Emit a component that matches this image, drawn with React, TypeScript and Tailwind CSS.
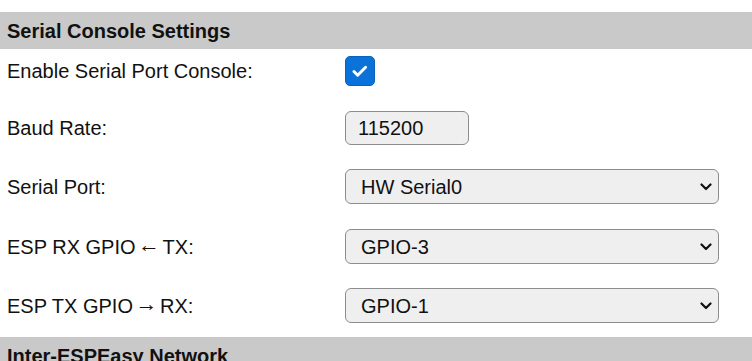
import React from 'react';

interface SelectRowProps {
  label: React.ReactNode;
  value: string;
  className?: string;
}

const Chevron: React.FC = () => (
  <svg
    className="pointer-events-none absolute right-[7px] top-1/2 -translate-y-1/2"
    width="12"
    height="8"
    viewBox="0 0 12 8"
  >
    <polyline points="1.5,1.5 6,6 10.5,1.5" fill="none" stroke="#111" strokeWidth="2.2" strokeLinecap="round" strokeLinejoin="round" />
  </svg>
);

// arrow glyph sits a bit larger/higher than the label text
const Arrow: React.FC<{ char: string }> = ({ char }) => (
  <span className="inline-block text-[22px] leading-none mx-[2.5px] -translate-y-[2px]">{char}</span>
);

const SectionHeader: React.FC<{ title: string; className?: string }> = ({ title, className = '' }) => (
  <div className={`h-[37px] flex items-center pl-[7px] bg-[#c9c9c9] font-bold text-[#111] ${className}`}>
    {title}
  </div>
);

const SelectRow: React.FC<SelectRowProps> = ({ label, value, className = '' }) => (
  <div className={`flex items-center h-[35px] ${className}`}>
    <div className="w-[345px] shrink-0 pl-[7px]">{label}</div>
    <div className="relative w-[374px] h-[35px]">
      <select
        defaultValue={value}
        className="appearance-none w-full h-full rounded-[6px] border border-[#8d8d8d] bg-[#efefef] pl-[15px] text-[20px] text-[#111] outline-none"
      >
        <option value={value}>{value}</option>
      </select>
      <Chevron />
    </div>
  </div>
);

const App: React.FC = () => {
  return (
    <div className="w-[752px] h-[361px] overflow-hidden bg-white pt-[12px] font-['Liberation_Sans',Arial,sans-serif] text-[20px] text-[#111]">
      <SectionHeader title="Serial Console Settings" />

      {/* Enable console */}
      <div className="flex items-center h-[30px] mt-[7px]">
        <div className="w-[345px] shrink-0 pl-[7px]">Enable Serial Port Console:</div>
        <div className="w-[30px] h-[30px] rounded-[5px] bg-[#0b72d9] border border-[#0a62bd] flex items-center justify-center">
          <svg width="30" height="30" viewBox="0 0 30 30">
            <polyline points="8.5,15.5 12.5,19.5 21,11" fill="none" stroke="#fff" strokeWidth="3.2" strokeLinecap="round" strokeLinejoin="round" />
          </svg>
        </div>
      </div>

      {/* Baud rate */}
      <div className="flex items-center h-[34px] mt-[25px]">
        <div className="w-[345px] shrink-0 pl-[7px]">Baud Rate:</div>
        <input
          type="text"
          defaultValue="115200"
          className="w-[124px] h-[34px] rounded-[6px] border border-[#8d8d8d] bg-[#efefef] pl-[12px] text-[20px] text-[#111] outline-none"
        />
      </div>

      <SelectRow label="Serial Port:" value="HW Serial0" className="mt-[24px]" />
      <SelectRow label={<>ESP RX GPIO<Arrow char="←" />TX:</>} value="GPIO-3" className="mt-[25px]" />
      <SelectRow label={<>ESP TX GPIO<Arrow char="→" />RX:</>} value="GPIO-1" className="mt-[24px]" />

      <SectionHeader title="Inter-ESPEasy Network" className="mt-[14px]" />
    </div>
  );
};

export default App;
